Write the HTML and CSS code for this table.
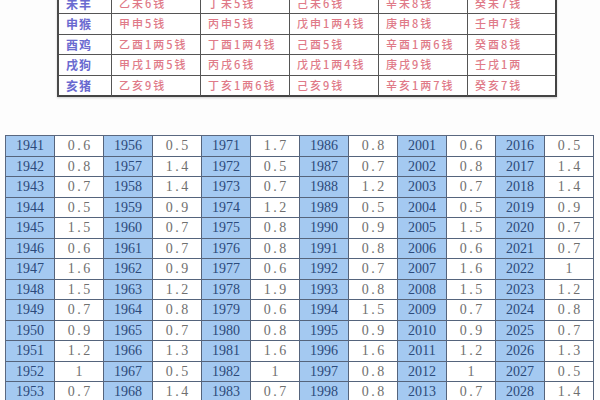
FILE: index.html
```html
<!DOCTYPE html>
<html lang="zh">
<head>
<meta charset="utf-8">
<link rel="stylesheet" href="styles.css">
</head>
<body>
<table class="wuxing">
<tr><td class="zod">未羊</td><td>乙未6钱</td><td>丁未5钱</td><td>己未6钱</td><td>辛未8钱</td><td>癸未7钱</td></tr>
<tr><td class="zod">申猴</td><td>甲申5钱</td><td>丙申5钱</td><td>戊申1两4钱</td><td>庚申8钱</td><td>壬申7钱</td></tr>
<tr><td class="zod">酉鸡</td><td>乙酉1两5钱</td><td>丁酉1两4钱</td><td>己酉5钱</td><td>辛酉1两6钱</td><td>癸酉8钱</td></tr>
<tr><td class="zod">戌狗</td><td>甲戌1两5钱</td><td>丙戌6钱</td><td>戊戌1两4钱</td><td>庚戌9钱</td><td>壬戌1两</td></tr>
<tr class="last"><td class="zod">亥猪</td><td>乙亥9钱</td><td>丁亥1两6钱</td><td>己亥9钱</td><td>辛亥1两7钱</td><td>癸亥7钱</td></tr>
</table>

<table class="years">
<tr><td class="yr">1941</td><td class="val">0.6</td><td class="yr">1956</td><td class="val">0.5</td><td class="yr">1971</td><td class="val">1.7</td><td class="yr">1986</td><td class="val">0.8</td><td class="yr">2001</td><td class="val">0.6</td><td class="yr">2016</td><td class="val">0.5</td></tr>
<tr><td class="yr">1942</td><td class="val">0.8</td><td class="yr">1957</td><td class="val">1.4</td><td class="yr">1972</td><td class="val">0.5</td><td class="yr">1987</td><td class="val">0.7</td><td class="yr">2002</td><td class="val">0.8</td><td class="yr">2017</td><td class="val">1.4</td></tr>
<tr><td class="yr">1943</td><td class="val">0.7</td><td class="yr">1958</td><td class="val">1.4</td><td class="yr">1973</td><td class="val">0.7</td><td class="yr">1988</td><td class="val">1.2</td><td class="yr">2003</td><td class="val">0.7</td><td class="yr">2018</td><td class="val">1.4</td></tr>
<tr><td class="yr">1944</td><td class="val">0.5</td><td class="yr">1959</td><td class="val">0.9</td><td class="yr">1974</td><td class="val">1.2</td><td class="yr">1989</td><td class="val">0.5</td><td class="yr">2004</td><td class="val">0.5</td><td class="yr">2019</td><td class="val">0.9</td></tr>
<tr><td class="yr">1945</td><td class="val">1.5</td><td class="yr">1960</td><td class="val">0.7</td><td class="yr">1975</td><td class="val">0.8</td><td class="yr">1990</td><td class="val">0.9</td><td class="yr">2005</td><td class="val">1.5</td><td class="yr">2020</td><td class="val">0.7</td></tr>
<tr><td class="yr">1946</td><td class="val">0.6</td><td class="yr">1961</td><td class="val">0.7</td><td class="yr">1976</td><td class="val">0.8</td><td class="yr">1991</td><td class="val">0.8</td><td class="yr">2006</td><td class="val">0.6</td><td class="yr">2021</td><td class="val">0.7</td></tr>
<tr><td class="yr">1947</td><td class="val">1.6</td><td class="yr">1962</td><td class="val">0.9</td><td class="yr">1977</td><td class="val">0.6</td><td class="yr">1992</td><td class="val">0.7</td><td class="yr">2007</td><td class="val">1.6</td><td class="yr">2022</td><td class="val">1</td></tr>
<tr><td class="yr">1948</td><td class="val">1.5</td><td class="yr">1963</td><td class="val">1.2</td><td class="yr">1978</td><td class="val">1.9</td><td class="yr">1993</td><td class="val">0.8</td><td class="yr">2008</td><td class="val">1.5</td><td class="yr">2023</td><td class="val">1.2</td></tr>
<tr><td class="yr">1949</td><td class="val">0.7</td><td class="yr">1964</td><td class="val">0.8</td><td class="yr">1979</td><td class="val">0.6</td><td class="yr">1994</td><td class="val">1.5</td><td class="yr">2009</td><td class="val">0.7</td><td class="yr">2024</td><td class="val">0.8</td></tr>
<tr><td class="yr">1950</td><td class="val">0.9</td><td class="yr">1965</td><td class="val">0.7</td><td class="yr">1980</td><td class="val">0.8</td><td class="yr">1995</td><td class="val">0.9</td><td class="yr">2010</td><td class="val">0.9</td><td class="yr">2025</td><td class="val">0.7</td></tr>
<tr><td class="yr">1951</td><td class="val">1.2</td><td class="yr">1966</td><td class="val">1.3</td><td class="yr">1981</td><td class="val">1.6</td><td class="yr">1996</td><td class="val">1.6</td><td class="yr">2011</td><td class="val">1.2</td><td class="yr">2026</td><td class="val">1.3</td></tr>
<tr><td class="yr">1952</td><td class="val">1</td><td class="yr">1967</td><td class="val">0.5</td><td class="yr">1982</td><td class="val">1</td><td class="yr">1997</td><td class="val">0.8</td><td class="yr">2012</td><td class="val">1</td><td class="yr">2027</td><td class="val">0.5</td></tr>
<tr><td class="yr">1953</td><td class="val">0.7</td><td class="yr">1968</td><td class="val">1.4</td><td class="yr">1983</td><td class="val">0.7</td><td class="yr">1998</td><td class="val">0.8</td><td class="yr">2013</td><td class="val">0.7</td><td class="yr">2028</td><td class="val">1.4</td></tr>
</table>
</body>
</html>
```

FILE: styles.css
```css
html, body {
  margin: 0;
  padding: 0;
  background: #fdfdfd;
  overflow: hidden;
}

body {
  padding-top: 0.1px;
}

.wuxing {
  margin: -6.5px 0 0 57px;
  border-collapse: separate;
  border-spacing: 0;
  border-left: 2px solid #4a4a4a;
  background: #fff;
  box-shadow: 0 1px 2px rgba(0, 0, 0, 0.18);
  font-family: "Noto Sans CJK SC", "Noto Sans", sans-serif;
}

.wuxing td {
  padding: 0 0 0 7px;
  height: 19.5px;
  line-height: 19.5px;
  border-right: 1px solid #555;
  border-bottom: 1px solid #555;
  font-size: 11px;
  letter-spacing: 2px;
  color: #e07a88;
  white-space: nowrap;
  width: 81px;
  font-weight: 500;
}

.wuxing td.zod {
  width: 45px;
  padding-left: 7px;
  font-size: 12px;
  letter-spacing: 1px;
  color: #6a6ad0;
  font-weight: 700;
}

.wuxing td:last-child {
  border-right: 2px solid #444;
  width: 80px;
}

.wuxing tr.last td {
  border-bottom: 2px solid #444;
}

.years {
  margin: 38px 0 0 5px;
  border-collapse: separate;
  border-spacing: 0;
  table-layout: fixed;
  border-top: 1px solid #5a6880;
  border-left: 1px solid #5a6880;
  font-family: "Liberation Serif", "Times New Roman", serif;
}

.years td {
  width: 48px;
  padding: 0;
  height: 19.5px;
  line-height: 19.5px;
  border-right: 1px solid #55647c;
  border-bottom: 1px solid #55647c;
  text-align: center;
  font-size: 14px;
  white-space: nowrap;
}

.years td.yr {
  background: #a4c9f1;
  color: #2c4a7a;
}

.years td.val {
  background: #fff;
  color: #707070;
  letter-spacing: 2.5px;
  text-indent: 2.5px;
}
```
